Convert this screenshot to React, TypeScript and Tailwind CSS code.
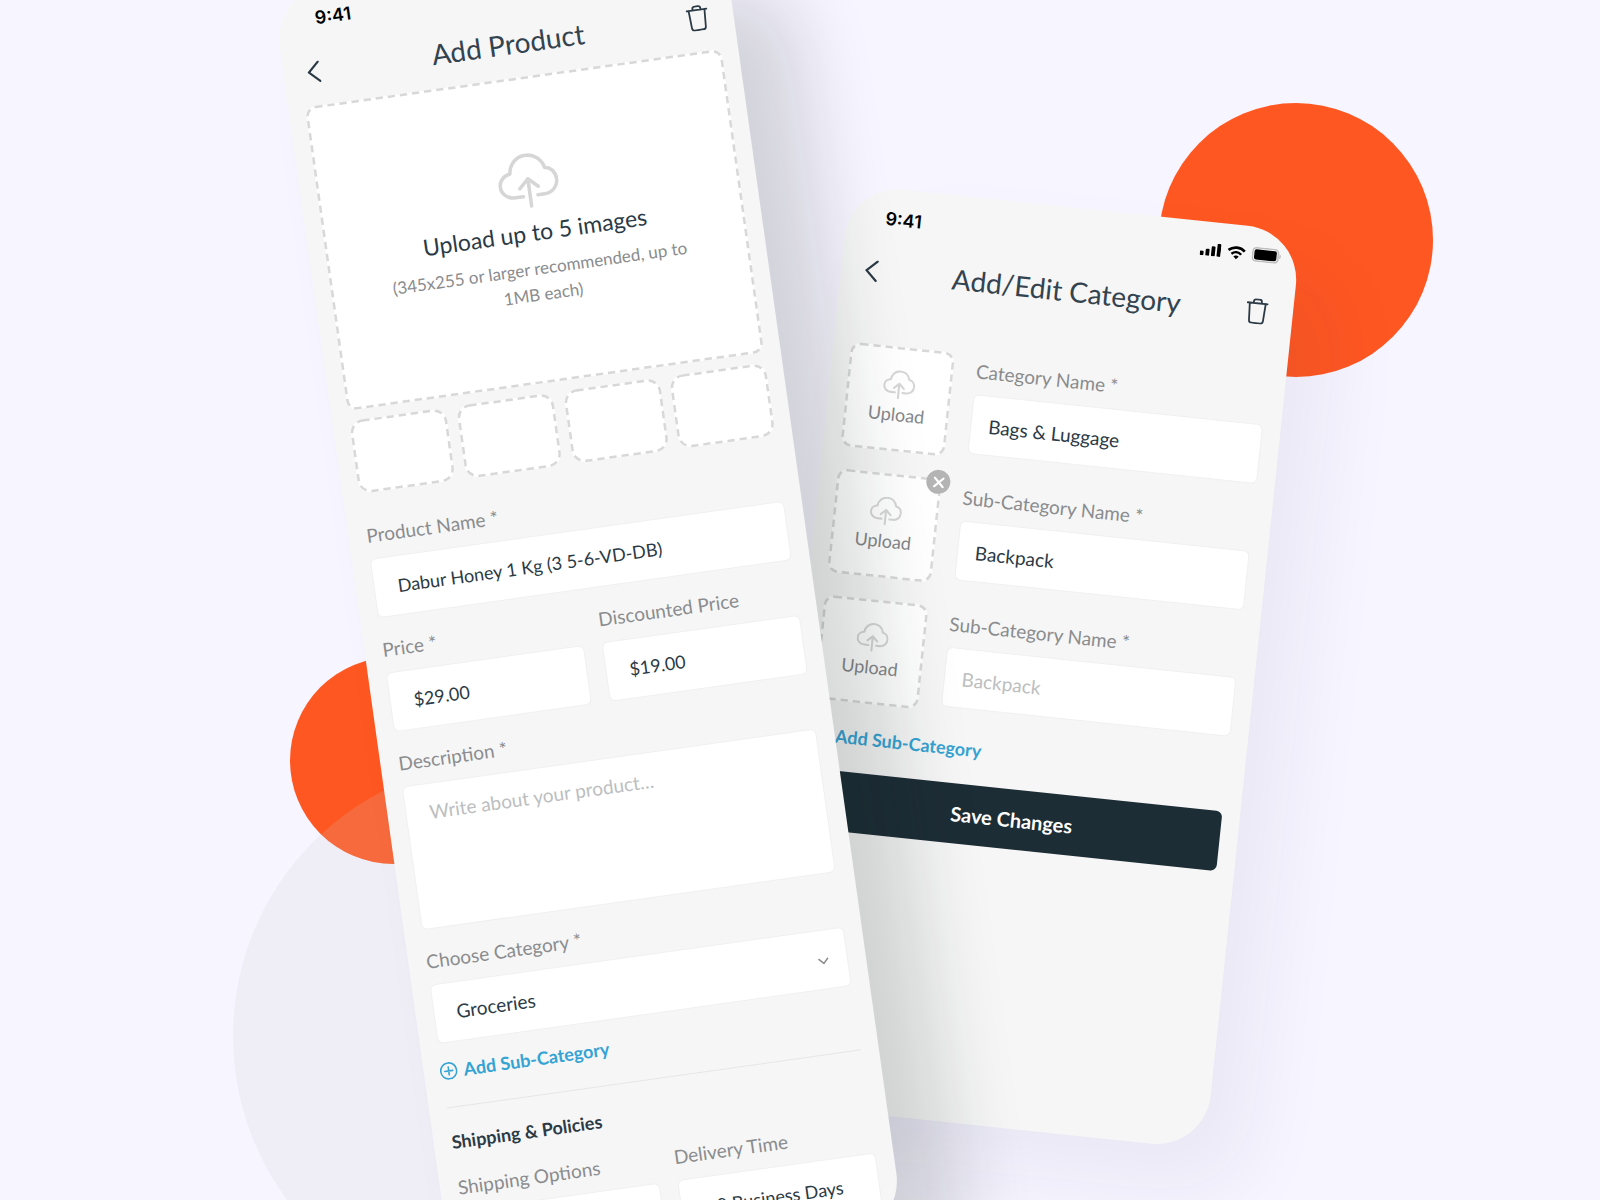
import type { ReactNode } from "react";

function CloudIcon({ className }: { className: string }) {
  return (
    <svg viewBox="0 0 62 56" fill="none" stroke="#d6d6d6" strokeLinecap="round" strokeLinejoin="round" className={className} aria-hidden="true">
      <path d="M24 43.500H16C8 43.500 2 38 2 31C2 24.500 7 19.500 13.500 19C14.500 9 22 2 31.500 2C40.500 2 47.500 8 49.500 17C55.500 17.500 60 23 60 30C60 37.500 54 43.500 46 43.500H39" />
      <path d="M31 54V26M21.500 35L31 26L40.500 35" />
    </svg>
  );
}

function TrashIcon() {
  return (
    <svg viewBox="0 0 22 26" fill="none" stroke="#2b3a45" strokeWidth="1.800" strokeLinejoin="round" strokeLinecap="round" className="h-[26px] w-[22px]" aria-hidden="true">
      <path d="M1 5H21M3 5L4 22.500C4.100 24 5 25 6.500 25H15.500C17 25 17.900 24 18 22.500L19 5M7 5V3.500C7 2 7.800 1.200 9.300 1.200H12.700C14.200 1.200 15 2 15 3.500V5" />
    </svg>
  );
}

function StatusBar() {
  return (
    <div className="flex h-[60px] items-center justify-between pr-[17px] pl-[39px]">
      <span className="font-['Inter',sans-serif] text-[18px] font-semibold text-black">9:41</span>
      <div className="flex items-center gap-[6px] pb-[5px]">
        <svg viewBox="0 0 21 13" className="h-[13px] w-[21px]" aria-hidden="true">
          <rect x="0" y="8.500" width="3.800" height="4.500" rx="1" />
          <rect x="5.700" y="6" width="3.800" height="7" rx="1" />
          <rect x="11.400" y="3" width="3.800" height="10" rx="1" />
          <rect x="17" y="0" width="3.800" height="13" rx="1" />
        </svg>
        <svg viewBox="0 0 19 14" className="h-[14px] w-[19px]" aria-hidden="true">
          <path d="M1.300 5C6 .8 13 .8 17.700 5" fill="none" stroke="#000" strokeWidth="2.600" />
          <path d="M4.600 8.500C7.500 5.900 11.500 5.900 14.400 8.500" fill="none" stroke="#000" strokeWidth="2.500" />
          <path d="M9.500 13.500L6.800 10.800C8.300 9.500 10.700 9.500 12.200 10.800Z" />
        </svg>
        <svg viewBox="0 0 30 15" className="h-[15px] w-[30px]" aria-hidden="true">
          <rect x=".8" y=".8" width="25.600" height="13.400" rx="3.500" fill="none" stroke="#bdbdbd" strokeWidth="1.500" />
          <rect x="2.400" y="2.400" width="22.400" height="10.200" rx="2" />
          <path d="M27.600 5C29.600 6 29.600 9 27.600 10Z" fill="#bdbdbd" />
        </svg>
      </div>
    </div>
  );
}

function Header({ title }: { title: string }) {
  return (
    <header>
      <StatusBar />
      <div className="flex h-[47px] items-center justify-between pr-[25px] pl-[24px]">
        <button type="button" aria-label="Back" className="w-[22px]">
          <svg viewBox="0 0 13 22" fill="none" stroke="#2b3a45" strokeWidth="2.200" strokeLinecap="round" className="h-[22px] w-[13px]" aria-hidden="true">
            <path d="M11.700 1.300L1.500 11L11.700 20.700" />
          </svg>
        </button>
        <h1 className="pb-0.5 text-[28px] leading-9 text-[#33434f]">{title}</h1>
        <button type="button" aria-label="Delete">
          <TrashIcon />
        </button>
      </div>
    </header>
  );
}

function Dashed({ radius }: { radius: number }) {
  return (
    <svg className="absolute inset-0 h-full w-full overflow-visible" aria-hidden="true">
      <rect x="1" y="1" rx={radius} className="h-[calc(100%-2px)] w-[calc(100%-2px)] fill-none stroke-[#d8d8d8]" strokeWidth="2.500" strokeDasharray="7.300 4.900" />
    </svg>
  );
}

const labelClass = "block text-[19px] leading-[26px] text-[#8a8c8e]";
const fieldClass =
  "block w-full rounded-md border border-[#f0f0f0] bg-white text-[#2b3a45] placeholder:text-[#bcbec0] outline-none";

type FieldProps = { id: string; label: string; value?: string; placeholder?: string; look?: string };

function Field({ id, label, value, placeholder, look = "px-[23px] text-[18px]" }: FieldProps) {
  return (
    <div className="min-w-0 flex-1">
      <label htmlFor={id} className={labelClass}>{label}</label>
      <input id={id} type="text" defaultValue={value} placeholder={placeholder} className={`${fieldClass} ${look} mt-[10px] h-[60px]`} />
    </div>
  );
}

function AddSubCategory() {
  return (
    <button type="button" className="-ml-0.5 flex items-center gap-[6px] text-[18px] leading-6 font-bold text-[#35a3d3]">
      <svg viewBox="0 0 18 18" fill="none" stroke="currentColor" strokeWidth="1.600" strokeLinecap="round" className="h-[18px] w-[18px]" aria-hidden="true">
        <circle cx="9" cy="9" r="8" />
        <path d="M9 5V13M5 9H13" />
      </svg>
      Add Sub-Category
    </button>
  );
}

type CategoryRowProps = { id: string; label: string; value?: string; placeholder?: string; removable?: boolean };

function CategoryRow({ id, label, value, placeholder, removable }: CategoryRowProps) {
  return (
    <div className="flex gap-[23px]">
      <div className="relative h-[104px] w-[104px] shrink-0">
        <button type="button" className="relative flex h-full w-full flex-col items-center justify-center gap-[3px] rounded-[10px] bg-white pb-[3px] text-[18px] leading-6 text-[#85878a]">
          <Dashed radius={9} />
          <CloudIcon className="h-[29px] w-[32px] stroke-[4]" />
          Upload
        </button>
        {removable && (
          <button type="button" aria-label="Remove sub-category" className="absolute -top-[9px] -right-[9px] flex h-6 w-6 items-center justify-center rounded-full bg-[#b4b4b4]">
            <svg viewBox="0 0 10 10" stroke="#fff" strokeWidth="2" strokeLinecap="round" className="h-[11px] w-[11px]" aria-hidden="true">
              <path d="M1 1L9 9M9 1L1 9" />
            </svg>
          </button>
        )}
      </div>
      <div className="flex flex-1 pt-[3px]">
        <Field id={id} label={label} value={value} placeholder={placeholder} look="px-[17px] text-[19px]" />
      </div>
    </div>
  );
}

function Phone({ className, children }: { className: string; children: ReactNode }) {
  return <section className={`absolute w-[454px] origin-top-left rounded-[54px] bg-[#f6f6f6] ${className}`}>{children}</section>;
}

function CategoryScreen() {
  return (
    <Phone className="top-[184px] left-[850px] h-[923px] rotate-6 shadow-[44px_44px_80px_rgba(40,40,80,0.060)]">
      <Header title="Add/Edit Category" />
      <form className="flex flex-col gap-[23px] px-[18px] pt-[50px]">
        <CategoryRow id="category" label="Category Name *" value="Bags & Luggage" />
        <CategoryRow id="sub-1" label="Sub-Category Name *" value="Backpack" removable />
        <CategoryRow id="sub-2" label="Sub-Category Name *" placeholder="Backpack" />
        <div className="pl-[3px]">
          <AddSubCategory />
        </div>
        <button type="button" className="h-[60px] w-full rounded-md bg-[#1d2d36] text-[20px] font-bold text-white">
          Save Changes
        </button>
      </form>
    </Phone>
  );
}

function ProductScreen() {
  return (
    <Phone className="top-[-7px] left-[272px] h-[1310px] -rotate-8 shadow-[58px_62px_76px_rgba(20,34,34,0.160)]">
      <Header title="Add Product" />
      <form className="px-[18px] pt-[11px]">
        <div className="-mx-px">
          <button type="button" className="relative flex h-[306px] w-full flex-col items-center justify-center rounded-[10px] bg-white">
            <Dashed radius={9} />
            <CloudIcon className="h-[55px] w-[61px] stroke-[3.600]" />
            <span className="mt-2 text-[23px] leading-8 text-[#2b3a45]">Upload up to 5 images</span>
            <span className="mt-2 w-[330px] text-[17px] leading-[26px] text-[#8a8c8e]">(345x255 or larger recommended, up to 1MB each)</span>
          </button>
          <div className="mt-[11px] flex gap-[11px]">
            {[1, 2, 3, 4].map((n) => (
              <button key={n} type="button" aria-label={`Image ${n + 1}`} className="relative h-[73px] flex-1 rounded-[13px] bg-white">
                <Dashed radius={12} />
              </button>
            ))}
          </div>
        </div>
        <div className="mt-[30px] flex flex-col gap-[19px]">
          <Field id="product-name" label="Product Name *" value="Dabur Honey 1 Kg (3 5-6-VD-DB)" />
          <div className="flex gap-[18px]">
            <Field id="price" label="Price *" value="$29.00" />
            <Field id="discount" label="Discounted Price" value="$19.00" />
          </div>
          <div>
            <label htmlFor="description" className={labelClass}>Description *</label>
            <textarea id="description" placeholder="Write about your product…" className={`${fieldClass} mt-[10px] h-[145px] resize-none px-[23px] py-4 text-[19px] leading-6`} />
          </div>
          <div>
            <label htmlFor="choose-category" className={labelClass}>Choose Category *</label>
            <div className="relative mt-[10px]">
              <select id="choose-category" className={`${fieldClass} h-[60px] appearance-none px-[22px] text-[19px]`}>
                <option>Groceries</option>
              </select>
              <svg viewBox="0 0 11 7" fill="none" stroke="#8a8c8e" strokeWidth="1.500" className="pointer-events-none absolute top-[28px] right-[19px] h-[7px] w-[11px]" aria-hidden="true">
                <path d="M.7 .7L5.500 5.800L10.300 .7" />
              </svg>
            </div>
          </div>
        </div>
        <div className="mt-4">
          <AddSubCategory />
        </div>
        <hr className="mt-6 border-[#e6e6e6]" />
        <h2 className="mt-[22px] text-[18px] leading-6 font-bold text-[#2b3a45]">Shipping &amp; Policies</h2>
        <div className="mt-[21px] flex gap-[18px]">
          <Field id="shipping" label="Shipping Options" />
          <Field id="delivery" label="Delivery Time" value="6-8 Business Days" look="px-[18px] text-[18px]" />
        </div>
      </form>
    </Phone>
  );
}

export default function App() {
  return (
    <main className="relative h-screen overflow-hidden bg-[#f7f5ff] font-['Lato',sans-serif]">
      <div className="absolute top-[103px] left-[1159px] h-[274px] w-[274px] rounded-full bg-[#ff5722]" />
      <div className="absolute top-[657px] left-[290px] h-[207px] w-[207px] rounded-full bg-[#ff5722]" />
      <div className="absolute top-[761px] left-[233px] h-[550px] w-[550px] rounded-full bg-[#c8c8c4]/17" />
      <CategoryScreen />
      <ProductScreen />
    </main>
  );
}
